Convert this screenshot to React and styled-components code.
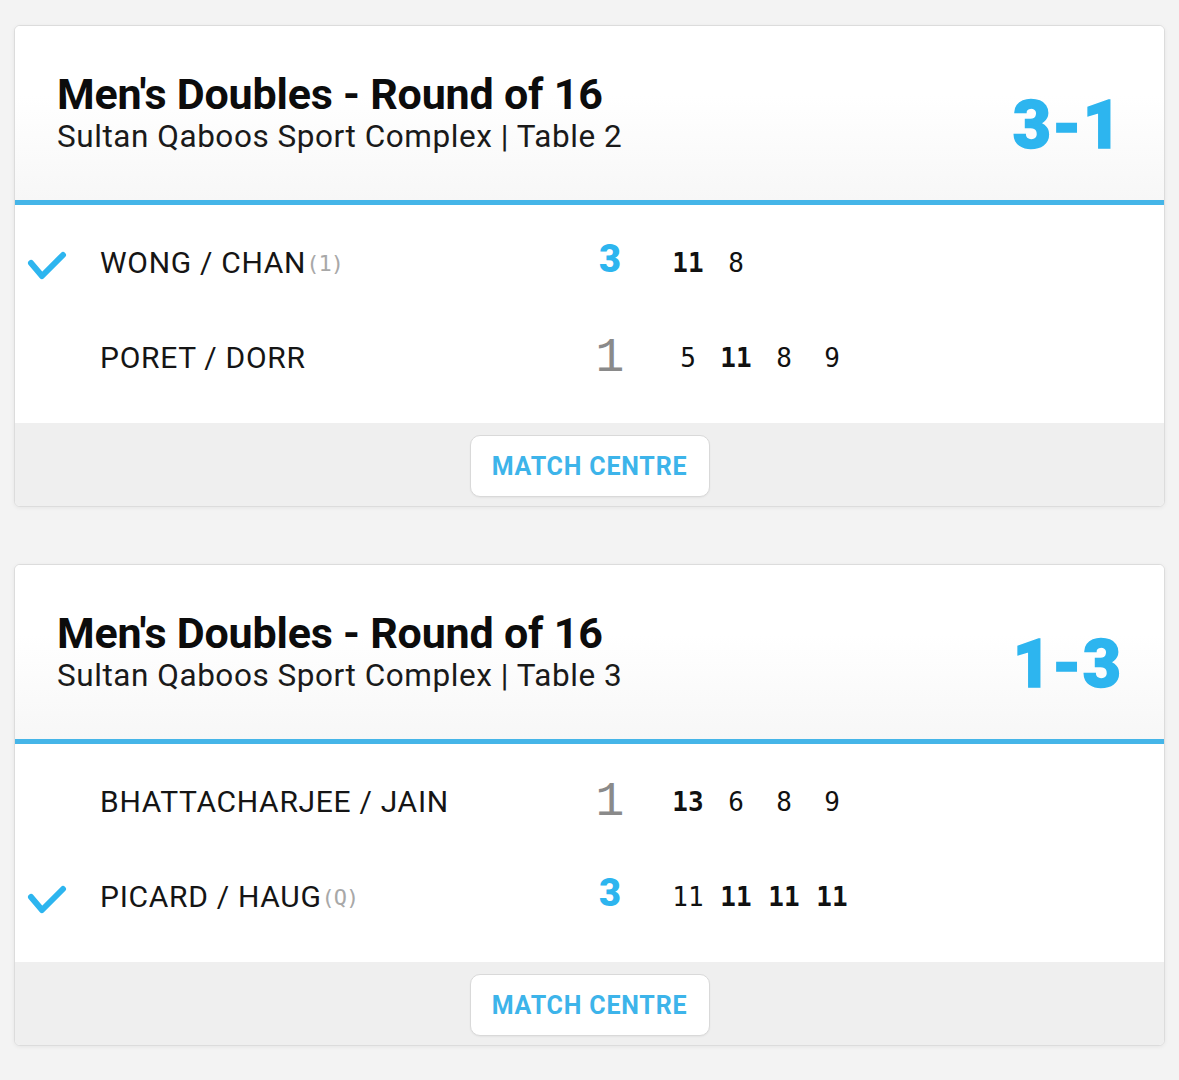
import styled, { createGlobalStyle } from "styled-components";

const BLUE = "#2db5ef";

const matches = [
  {
    id: 1,
    title: "Men's Doubles - Round of 16",
    venue: "Sultan Qaboos Sport Complex | Table 2",
    score: "3-1",
    teams: [
      {
        name: "WONG / CHAN",
        seed: "(1)",
        winner: true,
        sets: 3,
        games: [
          { v: 11, won: true },
          { v: 8, won: false },
        ],
      },
      {
        name: "PORET / DORR",
        winner: false,
        sets: 1,
        games: [
          { v: 5, won: false },
          { v: 11, won: true },
          { v: 8, won: false },
          { v: 9, won: false },
        ],
      },
    ],
  },
  {
    id: 2,
    title: "Men's Doubles - Round of 16",
    venue: "Sultan Qaboos Sport Complex | Table 3",
    score: "1-3",
    teams: [
      {
        name: "BHATTACHARJEE / JAIN",
        winner: false,
        sets: 1,
        games: [
          { v: 13, won: true },
          { v: 6, won: false },
          { v: 8, won: false },
          { v: 9, won: false },
        ],
      },
      {
        name: "PICARD / HAUG",
        seed: "(Q)",
        winner: true,
        sets: 3,
        games: [
          { v: 11, won: false },
          { v: 11, won: true },
          { v: 11, won: true },
          { v: 11, won: true },
        ],
      },
    ],
  },
];

// ─── Global ───────────────────────────────────────────────
const GlobalStyle = createGlobalStyle`
  html, body {
    margin: 0;
    padding: 0;
    background: #f3f3f3;
  }
  * { box-sizing: border-box; }
`;

// ─── Components ───────────────────────────────────────────
function CheckIcon() {
  return (
    <svg width="40" height="30" viewBox="0 0 40 30">
      <polyline
        points="4,12 15,25 36,4"
        fill="none"
        stroke={BLUE}
        strokeWidth="6"
        strokeLinecap="round"
        strokeLinejoin="round"
      />
    </svg>
  );
}

function TeamRow({ team }) {
  return (
    <Row>
      <CheckCell>{team.winner && <CheckIcon />}</CheckCell>
      <Name>
        {team.name}
        {team.seed && <Seed>{team.seed}</Seed>}
      </Name>
      <SetTotal $winner={team.winner}>{team.sets}</SetTotal>
      <span />
      {team.games.map((g, i) => (
        <Game key={i} $won={g.won}>
          {g.v}
        </Game>
      ))}
    </Row>
  );
}

function MatchCard({ match }) {
  return (
    <Card>
      <CardHeader>
        <Heading>
          <Title>{match.title}</Title>
          <Venue>{match.venue}</Venue>
        </Heading>
        <BigScore>{match.score}</BigScore>
      </CardHeader>
      <CardBody>
        {match.teams.map((t) => (
          <TeamRow key={t.name} team={t} />
        ))}
      </CardBody>
      <CardFooter>
        <CentreButton>MATCH CENTRE</CentreButton>
      </CardFooter>
    </Card>
  );
}

export default function App() {
  return (
    <>
      <GlobalStyle />
      <Page>
        {matches.map((m) => (
          <MatchCard key={m.id} match={m} />
        ))}
      </Page>
    </>
  );
}

// ─── Styled Components ────────────────────────────────────

const Page = styled.div`
  padding: 25px 14px;
  display: flex;
  flex-direction: column;
  gap: 57px;
  font-family: Roboto, "Liberation Sans", sans-serif;
  color: #111;
`;

const Card = styled.section`
  background: #fff;
  border: 1px solid #dcdcdc;
  border-radius: 6px;
  overflow: hidden;
  box-shadow: 0 1px 4px rgba(0, 0, 0, 0.06);
`;

/* ── Header ── */

const CardHeader = styled.header`
  height: 179px;
  padding: 0 42px;
  display: flex;
  align-items: center;
  justify-content: space-between;
  background: linear-gradient(180deg, #ffffff 0%, #ffffff 40%, #f7f7f7 100%);
  border-bottom: 5px solid #45b5e8;
`;

const Heading = styled.div`
  display: flex;
  flex-direction: column;
  margin-top: 0;
`;

const Title = styled.h2`
  margin: 0;
  font-size: 43px;
  line-height: 46px;
  font-weight: 700;
  color: #0c0c0c;
  letter-spacing: -0.2px;
`;

const Venue = styled.div`
  margin-top: 2px;
  font-size: 31.5px;
  line-height: 36px;
  font-weight: 400;
  color: #1a1a1a;
  letter-spacing: 0.55px;
`;

const BigScore = styled.div`
  margin-top: 26px;
  font-size: 66px;
  line-height: 66px;
  font-weight: 900;
  color: ${BLUE};
  letter-spacing: 1px;
  -webkit-text-stroke: 1.5px ${BLUE};
`;

/* ── Body ── */

const CardBody = styled.div`
  padding: 10px 0 18px;
`;

const Row = styled.div`
  height: 95px;
  display: grid;
  grid-template-columns: 85px 490px 40px 34px repeat(5, 48px);
  align-items: center;
`;

const CheckCell = styled.div`
  display: flex;
  align-items: center;
  padding-left: 12px;
  padding-top: 6px;
`;

const Name = styled.div`
  font-size: 30px;
  font-weight: 400;
  letter-spacing: 0.7px;
  color: #151515;
  white-space: nowrap;
`;

const Seed = styled.span`
  font-family: "DejaVu Sans Mono", monospace;
  font-size: 22px;
  color: #a8a8a8;
  letter-spacing: -1px;
  vertical-align: 2px;
`;

const SetTotal = styled.div`
  text-align: center;
  font-family: ${({ $winner }) =>
    $winner ? `Roboto, "Liberation Sans", sans-serif` : `"Liberation Mono", monospace`};
  font-size: ${({ $winner }) => ($winner ? "38px" : "48px")};
  font-weight: ${({ $winner }) => ($winner ? 900 : 400)};
  color: ${({ $winner }) => ($winner ? BLUE : "#8a8a8a")};
  margin-top: ${({ $winner }) => ($winner ? "-8px" : "0")};
`;

const Game = styled.div`
  text-align: center;
  font-family: "DejaVu Sans Mono", monospace;
  font-size: 26px;
  font-weight: ${({ $won }) => ($won ? 700 : 400)};
  color: #111;
`;

/* ── Footer ── */

const CardFooter = styled.footer`
  height: 83px;
  background: #efefef;
  display: flex;
  align-items: center;
  justify-content: center;
`;

const CentreButton = styled.button`
  width: 240px;
  height: 62px;
  margin-top: 3px;
  background: #fff;
  border: 1px solid #d9d9d9;
  border-radius: 10px;
  box-shadow: 0 1px 2px rgba(0, 0, 0, 0.05);
  font-family: Roboto, "Liberation Sans", sans-serif;
  font-size: 25px;
  font-weight: 700;
  letter-spacing: 0.8px;
  color: #3db4ea;
  cursor: pointer;
`;
